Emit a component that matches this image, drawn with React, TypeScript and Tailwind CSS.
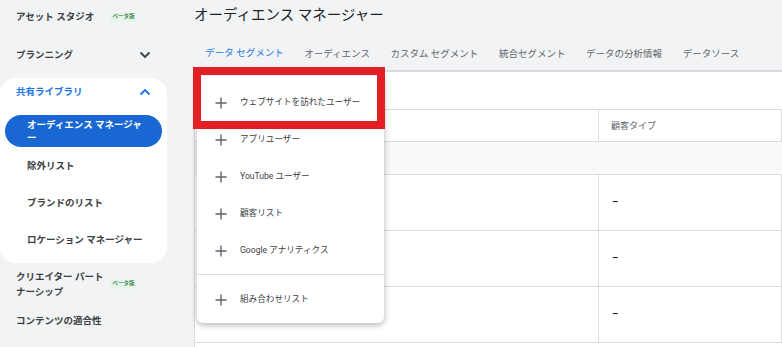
import React from "react";

const font = "font-['Roboto','Noto_Sans_CJK_JP',sans-serif]";

function Chevron({ up, color }: { up?: boolean; color: string }) {
  return (
    <svg width="12" height="8" viewBox="0 0 12 8" className="shrink-0">
      <path
        d={up ? "M1.5 6.5L6 2l4.5 4.5" : "M1.5 1.5L6 6l4.5-4.5"}
        fill="none"
        stroke={color}
        strokeWidth="1.8"
      />
    </svg>
  );
}

function Plus() {
  return (
    <svg width="12" height="12" viewBox="0 0 12 12" className="shrink-0">
      <path d="M6 0.5v11M0.5 6h11" stroke="#5f6368" strokeWidth="1.4" />
    </svg>
  );
}

function Beta() {
  return (
    <span className="ml-[4px] flex h-[9px] w-[27px] items-center justify-center rounded-[2px] bg-[#e6f4ea] text-[5.5px] font-medium leading-none text-[#137333]">
      ベータ版
    </span>
  );
}

const tabs = ["データ セグメント", "オーディエンス", "カスタム セグメント", "統合セグメント", "データの分析情報", "データソース"];

const menuItems = ["ウェブサイトを訪れたユーザー", "アプリユーザー", "YouTube ユーザー", "顧客リスト", "Google アナリティクス"];

export default function App() {
  return (
    <div className={`relative flex h-[347px] w-[782px] overflow-hidden bg-[#f1f3f4] ${font}`}>
      {/* sidebar */}
      <aside className="flex w-[194px] shrink-0 flex-col text-[9.5px] font-bold text-[#3c4043]">
        <div className="flex h-[34px] items-center pl-[16px]">
          <span className="w-[90px]">アセット スタジオ</span>
          <Beta />
        </div>
        <div className="flex h-[42px] w-[167px] items-center justify-between pl-[16px] pr-[16px]">
          <span>プランニング</span>
          <Chevron color="#3c4043" />
        </div>
        <div className="mt-[2px] w-[167px] rounded-[16px] bg-white pb-[4px]">
          <div className="flex h-[28px] items-center justify-between pl-[16px] pr-[16px] text-[#1a73e8]">
            <span>共有ライブラリ</span>
            <Chevron up color="#1a73e8" />
          </div>
          <div className="mx-[5px] mt-[9px] flex h-[32px] items-center rounded-full bg-[#1967d2] pl-[22px] text-white">
            <span className="w-[120px] leading-[13px]">オーディエンス マネージャー</span>
          </div>
          <div className="mt-[1px] flex h-[37px] items-center pl-[27px]">除外リスト</div>
          <div className="flex h-[37px] items-center pl-[27px]">ブランドのリスト</div>
          <div className="flex h-[37px] items-center pl-[27px]">ロケーション マネージャー</div>
        </div>
        <div className="flex h-[42px] items-center pl-[16px]">
          <span className="w-[90px] leading-[15px]">クリエイター パート ナーシップ</span>
          <Beta />
        </div>
        <div className="flex h-[32px] items-center pl-[16px]">コンテンツの適合性</div>
      </aside>

      {/* main */}
      <main className="flex min-w-0 flex-1 flex-col">
        <div className="flex h-[31px] items-center text-[14.5px] text-[#202124]">オーディエンス マネージャー</div>
        <nav className="flex h-[41px] items-stretch border-b-2 border-[#dadce0] pl-[1px] pt-[7px] text-[9.5px] text-[#5f6368]">
          {tabs.map((t, i) => (
            <div
              key={t}
              className={`flex items-center px-[10.3px] ${i === 0 ? "border-b-2 border-[#1a73e8] text-[#1a73e8]" : ""}`}
            >
              {t}
            </div>
          ))}
        </nav>
        <section className="flex-1 border-l border-[#dadce0] bg-white pt-[37px]">
          <div className="flex h-[33px] border-y border-[#dadce0] text-[9px] text-[#5f6368]">
            <div className="w-[404px] border-r border-[#dadce0]" />
            <div className="flex w-[183px] items-center border-r border-[#dadce0] pl-[12px] pt-[2px]">顧客タイプ</div>
          </div>
          <div className="h-[33px] border-b border-[#dadce0] bg-[#f8f9fa]" />
          {[0, 1, 2].map((r) => (
            <div key={r} className="flex h-[56px] border-b border-[#dadce0] text-[10px] font-medium text-[#202124]">
              <div className="w-[404px] border-r border-[#dadce0]" />
              <div className="flex w-[183px] items-center border-r border-[#dadce0] pl-[13px]">–</div>
            </div>
          ))}
        </section>
      </main>

      {/* dropdown menu */}
      <div className="absolute left-[197px] top-[76px] w-[187px] rounded-b-[6px] bg-white pb-[5px] pt-[8px] text-[8.6px] text-[#3c4043] shadow-[0_2px_6px_rgba(0,0,0,0.3)]">
        {menuItems.map((m) => (
          <div key={m} className="flex h-[37px] items-center gap-[13px] pl-[18px]">
            <Plus />
            <span>{m}</span>
          </div>
        ))}
        <div className="mt-[5px] border-t border-[#dadce0]" />
        <div className="mt-[6px] flex h-[37px] items-center gap-[13px] pl-[18px]">
          <Plus />
          <span>組み合わせリスト</span>
        </div>
      </div>

      {/* highlight */}
      <div className="absolute left-[193px] top-[67px] h-[62px] w-[192px] border-[8px] border-[#e41e25]" />
    </div>
  );
}
